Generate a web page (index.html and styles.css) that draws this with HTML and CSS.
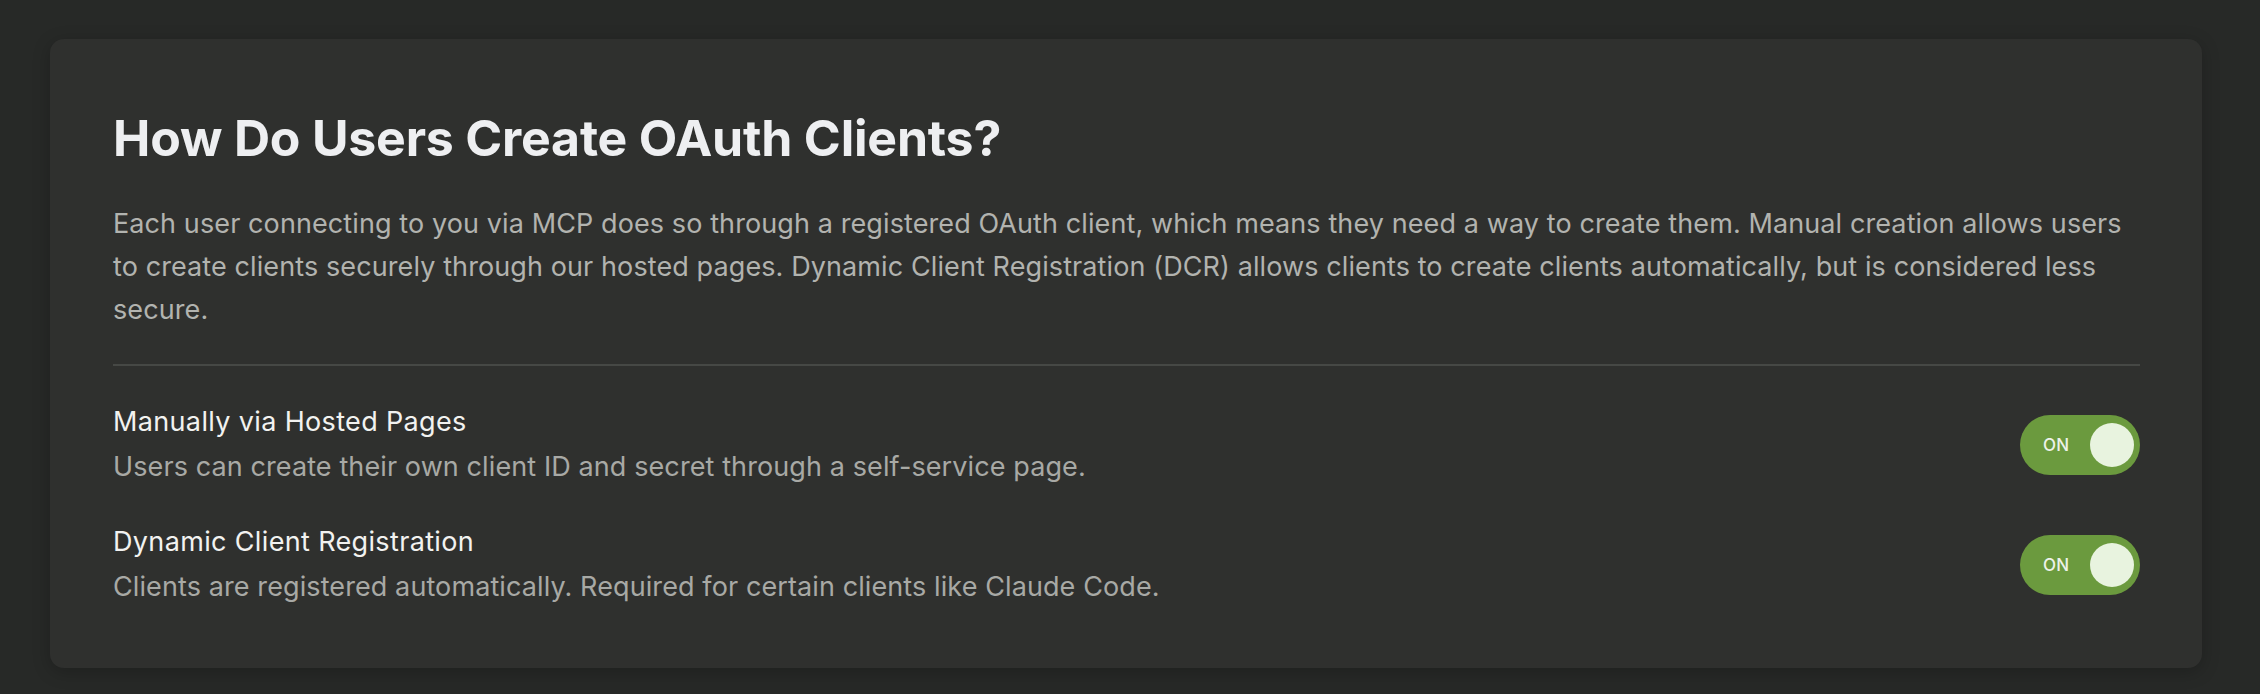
FILE: index.html
```html
<!DOCTYPE html>
<html lang="en">
<head>
<meta charset="utf-8">
<title>OAuth Clients</title>
<link rel="stylesheet" href="styles.css">
</head>
<body>
  <section class="card">
    <h1 class="title">How Do Users Create OAuth Clients?</h1>
    <p class="intro">Each user connecting to you via MCP does so through a registered OAuth client, which means they need a way to create them. Manual creation allows users to create clients securely through our hosted pages. Dynamic Client Registration (DCR) allows clients to create clients automatically, but is considered less secure.</p>
    <div class="options">
      <div class="option">
        <div class="option-text">
          <div class="option-title">Manually via Hosted Pages</div>
          <div class="option-desc">Users can create their own client ID and secret through a self-service page.</div>
        </div>
        <button class="toggle is-on" type="button"><span class="toggle-label">ON</span><span class="toggle-knob"></span></button>
      </div>
      <div class="option">
        <div class="option-text">
          <div class="option-title">Dynamic Client Registration</div>
          <div class="option-desc">Clients are registered automatically. Required for certain clients like Claude Code.</div>
        </div>
        <button class="toggle is-on" type="button"><span class="toggle-label">ON</span><span class="toggle-knob"></span></button>
      </div>
    </div>
  </section>
</body>
</html>
```

FILE: styles.css
```css
* { box-sizing: border-box; }

html, body {
  margin: 0;
  background: #272927;
}

body {
  padding: 39px 58px 27px 50px;
  font-family: Inter, "Noto Sans", "Liberation Sans", sans-serif;
  -webkit-font-smoothing: antialiased;
}

.card {
  background: #2f302e;
  border-radius: 14px;
  padding: 69px 62px 59px 63px;
  box-shadow: 0 4px 18px rgba(0, 0, 0, 0.22);
}

.title {
  margin: 0;
  font-size: 50px;
  line-height: 60px;
  font-weight: 700;
  color: #eeeff1;
  letter-spacing: -0.2px;
}

.intro {
  margin: 34px 0 0;
  padding-bottom: 33px;
  border-bottom: 2px solid #464845;
  font-size: 27px;
  line-height: 43px;
  letter-spacing: 0.1px;
  color: #b2b3af;
}

.options {
  display: flex;
  flex-direction: column;
  gap: 31px;
  padding-top: 34px;
}

.option {
  display: flex;
  align-items: center;
  justify-content: space-between;
}

.option-title {
  font-size: 27px;
  line-height: 44px;
  font-weight: 400;
  letter-spacing: 0.35px;
  color: #f2f2f0;
}

.option-desc {
  font-size: 27px;
  line-height: 45px;
  letter-spacing: 0.1px;
  color: #a8a9a5;
}

.toggle {
  position: relative;
  width: 120px;
  height: 60px;
  border: none;
  border-radius: 30px;
  background: #6b9a3e;
  padding: 0 0 0 23px;
  display: flex;
  align-items: center;
  cursor: pointer;
  font-family: Inter, "Noto Sans", sans-serif;
}

.toggle-label {
  font-size: 17px;
  font-weight: 500;
  color: #eef2ea;
  letter-spacing: 0.3px;
}

.toggle-knob {
  position: absolute;
  right: 6px;
  top: 8px;
  width: 44px;
  height: 44px;
  border-radius: 50%;
  background: #e8f3df;
}
```
